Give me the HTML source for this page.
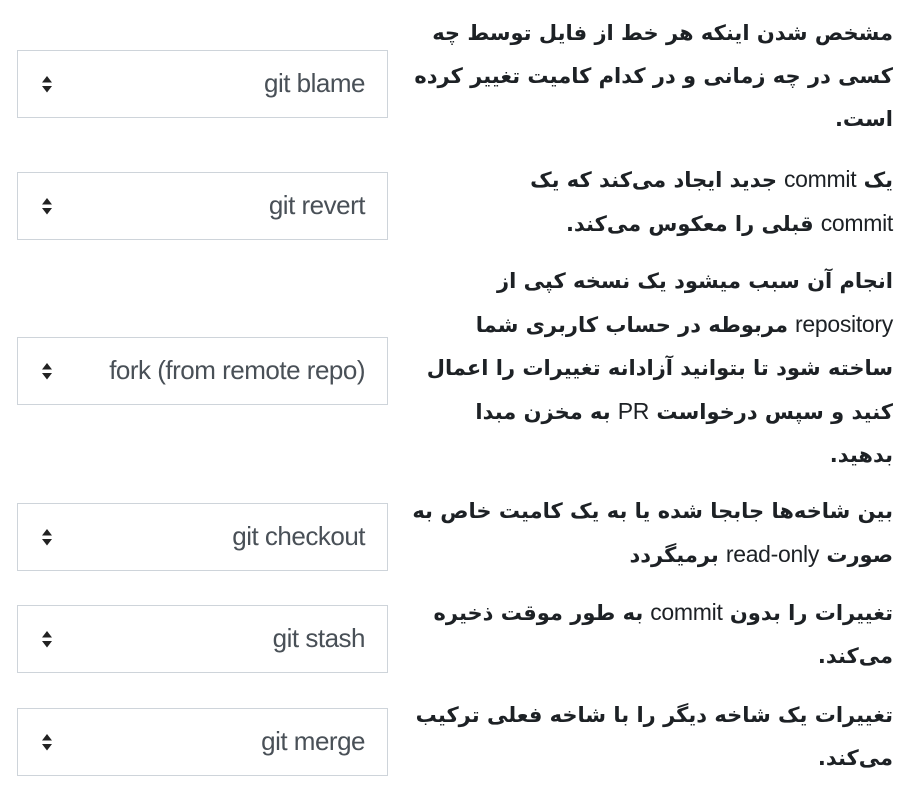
<html><head><style>
body{margin:0;width:912px;height:799px;background:#fff;position:relative;overflow:hidden}
.s{position:absolute;left:17px;width:369px;height:66px;border:1px solid #ced4da;box-sizing:content-box;font-family:"Liberation Sans",sans-serif;font-size:26px;color:#495057}
.s span{position:absolute;right:22px;top:50%;transform:translateY(-52%);white-space:nowrap;letter-spacing:-0.5px}
.s svg{position:absolute;left:23px;top:50%;margin-top:-9px}
.t{position:absolute;right:19px;direction:rtl;text-align:right;font-family:"DejaVu Sans",sans-serif;font-weight:bold;font-size:21px;line-height:43px;color:#1d2125;white-space:nowrap;letter-spacing:-0.3px}
.t i{font-style:normal;font-weight:normal;font-family:"Liberation Sans",sans-serif;font-size:23px}
</style></head><body>
<svg width="0" height="0" style="position:absolute"><defs><g id="a"><path d="M1 7.5 L6 1 L11 7.5Z M1 11 L6 17.5 L11 11Z" fill="#222"/></g></defs></svg>

<div class="s" style="top:50px"><svg width="12" height="19"><use href="#a"/></svg><span>git blame</span></div>
<div class="t" style="top:12px">مشخص شدن اینکه هر خط از فایل توسط چه<br>کسی در چه زمانی و در کدام کامیت تغییر کرده<br>است.</div>

<div class="s" style="top:172px"><svg width="12" height="19"><use href="#a"/></svg><span>git revert</span></div>
<div class="t" style="top:158px">یک <i>commit</i> جدید ایجاد می‌کند که یک<br><i>commit</i> قبلی را معکوس می‌کند.</div>

<div class="s" style="top:337px"><svg width="12" height="19"><use href="#a"/></svg><span>fork (from remote repo)</span></div>
<div class="t" style="top:260px">انجام آن سبب میشود یک نسخه کپی از<br><i>repository</i> مربوطه در حساب کاربری شما<br>ساخته شود تا بتوانید آزادانه تغییرات را اعمال<br>کنید و سپس درخواست <i>PR</i> به مخزن مبدا<br>بدهید.</div>

<div class="s" style="top:503px"><svg width="12" height="19"><use href="#a"/></svg><span>git checkout</span></div>
<div class="t" style="top:490px">بین شاخه‌ها جابجا شده یا به یک کامیت خاص به<br>صورت <i>read-only</i> برمیگردد</div>

<div class="s" style="top:605px"><svg width="12" height="19"><use href="#a"/></svg><span>git stash</span></div>
<div class="t" style="top:591px">تغییرات را بدون <i>commit</i> به طور موقت ذخیره<br>می‌کند.</div>

<div class="s" style="top:708px"><svg width="12" height="19"><use href="#a"/></svg><span>git merge</span></div>
<div class="t" style="top:694px">تغییرات یک شاخه دیگر را با شاخه فعلی ترکیب<br>می‌کند.</div>
</body></html>
